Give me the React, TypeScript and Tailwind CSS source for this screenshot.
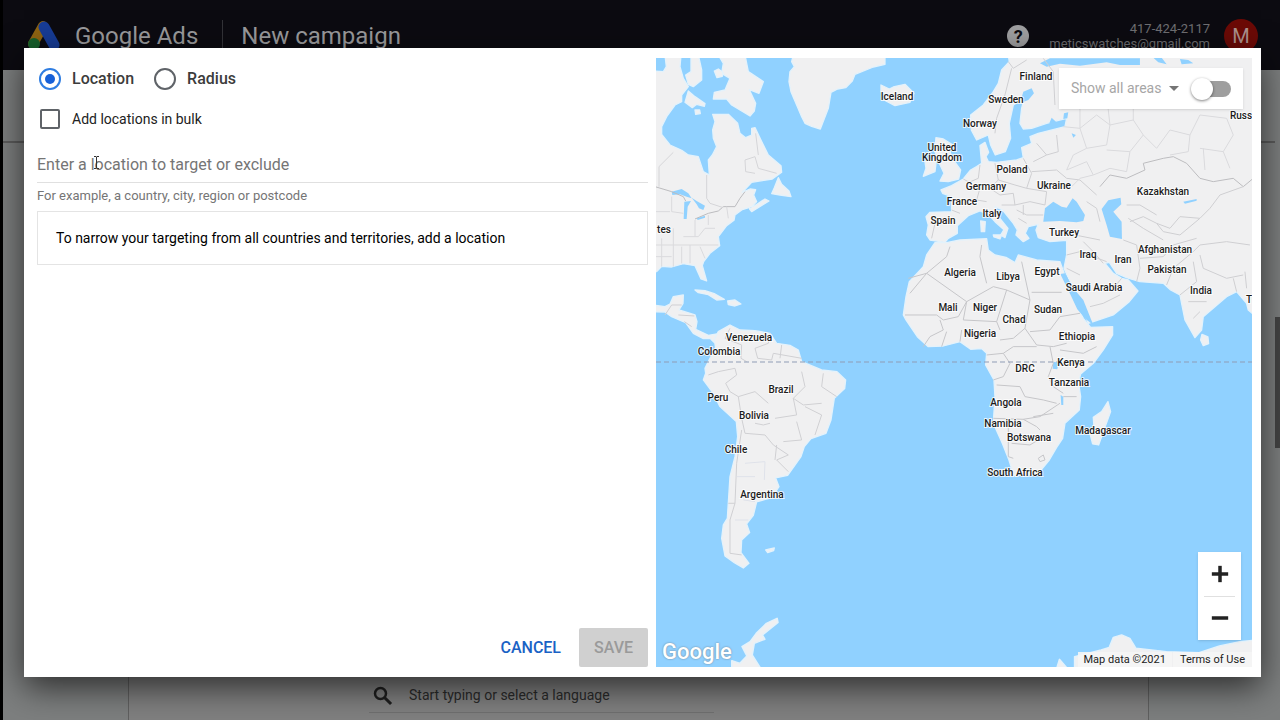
import { useState } from "react";
import { Minus, Plus } from "lucide-react";

// Country labels, x and y are the centre of the text on the map
const labels = [
  { name: "Iceland", x: 241, y: 38 },
  { name: "Finland", x: 380, y: 18 },
  { name: "Sweden", x: 350, y: 41 },
  { name: "Norway", x: 324, y: 65 },
  { name: "United", x: 286, y: 89 },
  { name: "Kingdom", x: 286, y: 99 },
  { name: "Poland", x: 356, y: 111 },
  { name: "Germany", x: 330, y: 128 },
  { name: "Ukraine", x: 398, y: 127 },
  { name: "France", x: 306, y: 143 },
  { name: "Italy", x: 336, y: 155 },
  { name: "Spain", x: 287, y: 162 },
  { name: "Turkey", x: 408, y: 174 },
  { name: "Kazakhstan", x: 507, y: 133 },
  { name: "Russ", x: 585, y: 57 },
  { name: "Afghanistan", x: 509, y: 191 },
  { name: "Pakistan", x: 511, y: 211 },
  { name: "Iraq", x: 432, y: 196 },
  { name: "Iran", x: 467, y: 201 },
  { name: "India", x: 545, y: 232 },
  { name: "T", x: 593, y: 241 },
  { name: "Saudi Arabia", x: 438, y: 229 },
  { name: "Algeria", x: 304, y: 214 },
  { name: "Libya", x: 352, y: 218 },
  { name: "Egypt", x: 391, y: 213 },
  { name: "Mali", x: 292, y: 249 },
  { name: "Niger", x: 329, y: 249 },
  { name: "Chad", x: 358, y: 261 },
  { name: "Sudan", x: 392, y: 251 },
  { name: "Nigeria", x: 324, y: 275 },
  { name: "Ethiopia", x: 421, y: 278 },
  { name: "Kenya", x: 415, y: 304 },
  { name: "DRC", x: 369, y: 310 },
  { name: "Tanzania", x: 413, y: 324 },
  { name: "Angola", x: 350, y: 344 },
  { name: "Namibia", x: 347, y: 365 },
  { name: "Botswana", x: 373, y: 379 },
  { name: "Madagascar", x: 447, y: 372 },
  { name: "South Africa", x: 359, y: 414 },
  { name: "Venezuela", x: 93, y: 279 },
  { name: "Colombia", x: 63, y: 293 },
  { name: "Brazil", x: 125, y: 331 },
  { name: "Peru", x: 62, y: 339 },
  { name: "Bolivia", x: 98, y: 357 },
  { name: "Chile", x: 80, y: 391 },
  { name: "Argentina", x: 106, y: 436 },
  { name: "tes", x: 8, y: 171 },
];

const WorldMap = () => (
  <svg
    viewBox="0 0 596 609"
    preserveAspectRatio="xMidYMid slice"
    className="block h-full w-full bg-[#90d1ff]"
    role="img"
    aria-label="World map"
  >
    <g transform="scale(0.3333)" fill="#f0f0f1" stroke="#e4f2fb" strokeWidth="4" strokeLinejoin="round">
      {/* North America */}
      <g transform="translate(-3 -9)">
        <path d="M-10 48L25 50L34 35L30 0H78L75 35L85 70L100 95L80 120V140L60 150L35 185L20 215V238L45 270L80 286L100 300L130 305L145 350L163 360L160 315L172 300L185 275L175 250L173 225L180 200L173 178L220 178L248 205L255 235L272 248L290 240V220L300 218L320 260L340 300L378 332L380 352L352 372L290 382L262 412L285 402L302 404L296 420L305 440L284 462L290 470L342 438L330 432L300 452L260 465L240 480L237 496L215 512L190 545L194 572L165 595L146 620L142 632L155 678L138 672L120 632L85 626L50 636L20 634L5 650H-10Z" />
        <path d="M190 0H270L280 50L325 80L312 115L283 104L302 145L298 168L285 183L230 150L215 132L175 132L178 112L210 105L225 70L200 55L205 25Z" />
        <path d="M108 0H130L140 45V75L115 95L100 88L92 60L108 50Z" />
        <path d="M100 108L120 125L150 146L148 154L125 148L112 158L90 142Z" />
        <path d="M178 48L190 42L204 52L202 64L186 68Z" />
        <path d="M120 165L134 165L136 176L122 178Z" />
        <path d="M370 368L380 388L402 408L408 425L375 420L350 416L358 398Z" />
        <path d="M415 0H690V28L655 36L600 58L592 78L572 98L548 102L528 112L520 160L496 222L470 214L450 205L440 185L425 150L408 110L402 80L405 50L418 35L410 20Z" />
        <g fill="#90d1ff" stroke="none">
          <path d="M0 15L12 18L22 38L10 46L0 40Z" />
          <path d="M50 410L80 402L100 415L110 430L95 425L75 418L52 420Z" />
          <path d="M88 440L108 438L98 455L95 492L86 492Z" />
          <path d="M110 428L125 438L150 452L145 465L132 460L125 448Z" />
          <path d="M125 490L150 482L150 488L128 495Z" />
          <path d="M58 160L66 163L62 168Z" />
        </g>
        <g fill="none" stroke="#bcbcbf" strokeWidth="3">
          <path d="M0 395L50 410L85 425L92 438M120 492L160 475L190 468L205 455L240 455L255 430L270 410" />
          <path d="M12 395V335L55 292M155 360V430L165 445L205 458M270 315L300 305L310 340L365 355M270 315L272 350L300 355M302 235L310 300" stroke="#d5d5d8" />
          <path d="M0 570H190M20 550V635M55 520V635M80 575V625M105 570V625M120 495V545M0 605H50M85 545L130 545L150 520L180 520M50 425V470L85 475M135 575L150 610M215 455L220 490M0 470L45 470M160 480V510" stroke="#dadadd" />
        </g>
      </g>

      {/* Central and South America */}
      <g transform="translate(-3 696)">
        <path d="M-10 45L30 50L45 42L55 20L85 15L84 40L72 60L120 75L126 95L122 118L160 136L186 132L192 148L178 158L165 145L145 146L115 130L92 98L50 80L30 66L-10 65Z" />
        <path d="M120 0L150 2L180 12L208 28L185 30L160 14L130 8Z" />
        <path d="M218 33L240 30L258 42L240 48L220 44Z" />
        <path d="M178 148L190 125L225 105L255 120L300 122L345 130L365 160L405 166L430 180L440 215L500 240L546 245L572 270L569 296L538 325L528 390L513 430L468 446L448 470L438 500L398 556L362 564L372 590L350 623L305 636L295 676L275 702L284 728L260 750L258 788L282 820L265 834L238 818L210 798L200 745L205 705L217 685L225 560L240 500L248 440L244 395L195 350L175 310L145 270L152 250L150 235L165 205L182 175Z" />
        <path d="M332 780L358 774L356 782L338 788Z" />
        <g fill="none" stroke="#d0d0d3" strokeWidth="3">
          <path d="M225 115L210 145L260 165L258 205L275 215M345 130L340 160L300 175L308 205L350 210L355 190L440 205M380 165L375 205M160 255L190 245L240 235L245 255L212 280L225 305L250 320L300 305L340 340M250 320L260 385L270 430L330 435L355 465L400 495L365 510L400 545M440 245L450 290L415 325L425 375L360 385M450 350L500 375L480 435M505 250L500 290L545 320M415 325L445 345L500 340M425 395L440 450L385 455M365 465L360 510M260 420L245 520L240 640L225 690L225 790L260 795M220 640L240 640M345 400L325 405L300 400M30 75L50 45L80 45M70 75L118 78M88 95L110 110" />
          <path d="M270 520L330 515L328 570M245 560L300 560M265 630L300 635M240 690L280 690" stroke="#dfe2ea" />
        </g>
      </g>

      {/* Europe and Asia */}
      <g transform="translate(672 -9)">
        <path d="M385 0L388 20L365 45L355 85L340 110L310 150L272 180L274 225L290 255L325 240L332 270L346 300L376 290L392 250L388 205L400 150L432 132L425 160L420 205L430 222L455 220L500 205L560 190L555 215L475 235L450 245L455 265L425 278L430 308L410 315L350 322L325 320L318 305L326 292L315 262L300 272L305 325L290 335L272 345L250 372L215 392L183 405L188 415L214 425L215 470L150 472L138 485L145 510L140 540L150 555L195 562L205 550L232 535L232 512L265 482L300 468L325 478L345 500L372 524L362 540L375 548L384 520L350 478L345 455L368 465L400 505L412 525L408 540L430 560L447 550L436 535L445 515L475 508L468 525L475 548L510 560L560 556L560 600L552 640L590 722L625 805L700 780L748 740L774 708L745 675L725 670L700 655L675 625L688 622L710 655L740 668L780 680L850 685L872 705L900 720L905 745L915 795L945 848L965 825L970 785L1005 755L1040 725L1070 710L1100 745L1105 765L1135 790V0Z" />
        <path d="M3 90L28 102L40 96L75 88L102 115L90 142L45 152L12 135L18 118L3 110Z" />
        <path d="M168 248L190 252L222 272L210 290L218 312L242 345L236 372L205 380L180 378L192 355L178 325L165 290Z" />
        <path d="M135 320L160 312L168 325L165 350L130 364L138 340Z" />
        <path d="M302 498L316 500L314 530L304 530ZM340 540L365 540L360 552L342 546Z" />
        <path d="M966 838L984 846L986 866L970 872L962 855Z" />
        <g fill="#90d1ff" stroke="none">
          <path d="M430 110L455 100L462 115L445 135L420 145Z" />
          <path d="M495 460L520 440L545 455L560 458L578 430L590 440L615 480L610 498L590 502L540 498L490 500Z" />
          <path d="M665 462L685 436L722 428L724 448L700 470L725 500L726 552L690 545L680 510Z" />
          <path d="M480 25L510 10H780V30H720L680 22L600 32L540 26L500 35Z" />
          <path d="M820 8H845L860 28L835 22ZM900 12L925 15L940 25L905 28Z" />
          <path d="M515 188L528 200L522 215L508 205ZM552 175L565 172L562 190L550 192ZM575 235L588 240L580 248Z" />
          <path d="M910 440L950 432V437L915 446Z" />
        </g>
        <g fill="none" stroke="#cfcfd2" strokeWidth="3">
          <path d="M385 20L400 40L440 15M395 40L375 120L350 190L345 235M490 10L520 50L525 150M300 330L295 370L260 385M250 372L300 400L290 435L320 440M345 325L355 375L405 390L440 400L455 355L430 310M355 375L330 400L360 420L400 415L405 450L365 450M440 400L500 410L495 450L450 440L405 450M455 350L530 345L560 370L600 375L650 420M470 265L500 300L460 320M530 240L535 290L500 300M150 505L165 505L155 550M410 465L440 480L490 480M415 490L440 505M215 465L240 475M430 450L430 480" />
          <path d="M550 215L600 220L620 280L580 300L560 345M620 280L680 270L690 210L650 180L600 220M690 210L760 195L790 240L750 290L680 285M790 240L830 280L870 225L930 240L925 290L870 300M930 240L960 180L1040 190L1060 240L1030 290L960 280M750 290L740 350L690 340L640 360L620 320M560 345L620 320M1030 290L1050 340M600 120V220M680 120L690 210M760 120L760 195M970 280L975 345M570 400L600 370L640 360" stroke="#dadadd" />
          <path d="M660 395L690 360L740 370L795 345L790 325L850 310L880 305L920 325L960 370L1000 380L1060 370L1090 395L1120 370" stroke="#bdbdc0" />
          <path d="M1090 395L1020 420L990 460L960 490L900 485L870 520L830 505L790 485L750 500M830 505L850 530L900 540L960 490M740 450L780 450L830 480M745 490L790 520L850 555M620 440L650 460L660 500M610 560L640 590L670 625M730 555L770 570L780 640L770 680M780 610L850 605L880 570L950 550M860 690L880 640L940 590L960 570L1040 560L1110 570M960 600L970 640L1040 670L1090 660M940 620L950 680L900 720M1060 670L1070 710M560 600L600 590L680 620M560 640L600 660M630 755L670 745L720 720M700 700L725 670M925 740L980 740M940 790L960 770M1095 650L1100 700M585 540L660 555" />
        </g>
      </g>

      {/* Africa */}
      <g transform="translate(672 516)">
        <path d="M165 38L200 38L240 30L320 26L325 60L345 75L378 82L405 98L415 75L470 90L540 95L552 128L575 190L595 235L610 265L632 292L698 290L698 315L670 360L640 400L602 432L596 460L602 500L598 540L555 580L548 625L530 652L508 690L475 730L402 738L387 690L367 640L340 580L345 500L342 450L317 405L320 370L305 356L272 358L240 335L190 348L145 350L112 320L78 270L70 255L78 200L88 155L130 110L140 75Z" />
        <path d="M684 515L692 545L672 600L656 645L638 642L630 610L642 590L640 562L665 545Z" />
        <path d="M541 132L555 130L580 175L610 210L640 285L618 268L592 238L572 195Z" fill="#90d1ff" stroke="none" />
        <path d="M520 395L536 398L532 418L518 416ZM542 495L550 500L550 525L544 525Z" fill="#90d1ff" stroke="none" />
        <g fill="none" stroke="#c6c6c9" strokeWidth="3">
          <path d="M140 130L260 215L340 170L380 180L450 210M140 130L90 190M85 145L140 130L200 80L210 50M305 45L300 80L320 160M425 95L450 210M455 187H545M75 255H170L190 270L235 260L260 215M260 215L250 270L350 275L360 300M350 275L380 180M130 350L150 320L190 300L180 270M185 350L200 305M240 335L245 300M360 330L400 325L435 295L450 210M435 295L470 345L520 350L560 340M450 305L510 300L540 260L600 250M540 360L610 370L650 350M320 375L370 370L400 350L470 350M370 370L390 400L370 440L340 450M350 465L420 470L435 500L490 510L530 520M510 350L520 400L505 440L520 470L550 490M550 500L590 500M340 565L430 568L480 560L540 520M430 568L470 590L480 600M460 560L520 550M385 590L385 680L400 685M395 640L450 645L500 615M475 685L490 675L495 690L480 695Z" />
        </g>
      </g>

      {/* Antarctica */}
      <g transform="translate(-48 1446) scale(1.2245 1)">
        <path d="M336 235L338 248L300 285L306 298L280 310L275 345L298 390H225V362L245 370L262 348L250 320L270 305L285 280L310 250Z" />
        <path d="M1020 390L1028 358L1050 390ZM1065 350L1130 330L1150 322L1160 292L1180 285L1200 295L1215 325L1290 335L1370 338L1420 318L1470 305L1510 300V390H1065Z" />
      </g>
    </g>

    {/* Equator */}
    <path d="M0 304H596" stroke="#8f9cb5" strokeWidth="1" strokeDasharray="5 3" />

    <g
      fill="#1c1c1c"
      stroke="#ffffff"
      strokeOpacity="0.8"
      strokeWidth="2"
      paintOrder="stroke"
      textAnchor="middle"
      className="text-[10px] font-medium"
    >
      {labels.map((label) => (
        <text key={label.name} x={label.x} y={label.y} dominantBaseline="central">
          {label.name}
        </text>
      ))}
    </g>
  </svg>
);

const MapPanel = () => {
  const [showAreas, setShowAreas] = useState(false);

  return (
    <div className="relative min-h-[609px] overflow-hidden">
      <div className="absolute inset-0">
        <WorldMap />
      </div>

      {/* Area filter */}
      <div className="absolute top-[10px] right-[9px] flex h-[41px] items-center bg-white px-3 shadow">
        <select
          aria-label="Areas"
          className="w-[106px] appearance-none bg-transparent text-[14px] text-[#a6a6a6] outline-none"
        >
          <option>Show all areas</option>
        </select>
        <svg viewBox="0 0 10 5" className="pointer-events-none -ml-2 h-[5px] w-[10px]" fill="#757575">
          <path d="M0 0H10L5 5Z" />
        </svg>
        <label className="relative ml-3 flex h-6 w-10 cursor-pointer items-center">
          <input
            type="checkbox"
            className="peer sr-only"
            aria-label="Show areas on map"
            checked={showAreas}
            onChange={() => setShowAreas(!showAreas)}
          />
          <span className="ml-1 h-4 w-9 rounded-full bg-[#9e9e9e] peer-checked:bg-[#8ab4f8]"></span>
          <span className="absolute left-0 h-[22px] w-[22px] rounded-full bg-white shadow-[0_1px_3px_rgba(0,0,0,0.5)] peer-checked:left-5"></span>
        </label>
      </div>

      {/* Zoom controls */}
      <div className="absolute right-[11px] bottom-[27px] flex h-[88px] w-[43px] flex-col items-center bg-white shadow">
        <button aria-label="Zoom in" className="flex w-full flex-1 items-center justify-center">
          <Plus size={28} strokeWidth={3} strokeLinecap="butt" color="#222" />
        </button>
        <span className="h-px w-[31px] bg-[#e0e0e0]"></span>
        <button aria-label="Zoom out" className="flex w-full flex-1 items-center justify-center">
          <Minus size={28} strokeWidth={3} strokeLinecap="butt" color="#222" />
        </button>
      </div>

      {/* Attribution */}
      <span className="absolute bottom-0 left-[6px] text-[22px] leading-[30px] font-medium text-white [text-shadow:0_0_2px_#6b7d8c]">
        Google
      </span>
      <div className="absolute right-0 bottom-0 flex h-[15px] text-[11px] leading-[15px] text-[#222]">
        <span className="bg-[#f5f5f5]/90 px-[6px]">Map data ©2021</span>
        <a href="#terms" className="ml-px bg-[#f5f5f5]/90 px-[7px]">
          Terms of Use
        </a>
      </div>
    </div>
  );
};

const LocationForm = () => {
  const [mode, setMode] = useState("location");

  const modes = [
    { name: "Location", id: "location" },
    { name: "Radius", id: "radius" },
  ];

  return (
    <form className="flex flex-col pt-[9px]" onSubmit={(e) => e.preventDefault()}>
      <div className="flex gap-5 pl-[2px]">
        {modes.map((item) => (
          <label key={item.id} className="flex h-6 items-center gap-[11px] text-[16px] font-medium text-[#3c3c3c]">
            <input
              type="radio"
              name="mode"
              checked={mode === item.id}
              onChange={() => setMode(item.id)}
              className="h-[22px] w-[22px] appearance-none rounded-full border-2 border-[#5f6368] bg-clip-content p-1 checked:border-[#2f7de1] checked:bg-[#1660d8]"
            />
            {item.name}
          </label>
        ))}
      </div>

      <label className="mt-4 flex h-6 items-center gap-3 pl-[3px] text-[14px] text-[#222]">
        <input type="checkbox" className="h-5 w-5 appearance-none rounded-[2px] border-2 border-[#5f6368] checked:bg-[#1660d8]" />
        Add locations in bulk
      </label>

      <div className="relative mt-4 border-b border-[#e0e0e0]">
        <input
          type="text"
          aria-label="Enter a location to target or exclude"
          placeholder="Enter a location to target or exclude"
          className="block h-[35px] w-full bg-transparent text-[16px] text-[#333] outline-none placeholder:text-[#757575]"
        />
        {/* Text cursor */}
        <svg viewBox="0 0 7 15" className="absolute top-2 left-[56px] h-[15px] w-[7px]" fill="none" stroke="#333">
          <path d="M1 1.5H3L3.5 2L4 1.5H6M3.5 2V13M1 13.5H3L3.5 13L4 13.5H6" />
        </svg>
      </div>
      <p className="mt-1 text-[13px] leading-[18px] text-[#757575]">
        For example, a country, city, region or postcode
      </p>
      <div className="mt-[6px] border border-[#e4e4e4] px-[18px] py-4 text-[14px] leading-5 text-black">
        To narrow your targeting from all countries and territories, add a location
      </div>

      <div className="mt-auto flex justify-end gap-2 text-[16px] font-medium">
        <button type="button" className="h-[39px] px-[10px] text-[#1a62c5]">
          CANCEL
        </button>
        <button type="submit" disabled className="h-[39px] w-[69px] rounded-[2px] bg-[#d0d0d0] text-[#9a9a9a]">
          SAVE
        </button>
      </div>
    </form>
  );
};

const Header = () => (
  <header className="flex h-[70px] items-center bg-[#0c0b11] pt-[2px] pr-[22px] pl-[24px] text-[#9b9b9d]">
    {/* Logo */}
    <svg viewBox="0 0 36 32" className="h-8 w-9" strokeLinecap="round">
      <path d="M16 6L6 24" stroke="#8f6412" strokeWidth="10" />
      <circle cx="7" cy="24" r="6" fill="#17602c" />
      <path d="M17 7L27 25" stroke="#173c96" strokeWidth="11" />
    </svg>
    <span className="ml-3 text-[24px] leading-8">Google Ads</span>
    <span className="mr-[18px] ml-6 h-8 w-px bg-[#333338]"></span>
    <h1 className="text-[24px] leading-8">New campaign</h1>

    <button
      aria-label="Help"
      className="ml-auto flex h-[22px] w-[22px] items-center justify-center rounded-full bg-[#a0a0a2] text-[18px] font-bold text-[#0c0b11]"
    >
      ?
    </button>
    <div className="ml-5 text-right text-[13px] leading-[15px] text-[#6f6f72]">
      <p>417-424-2117</p>
      <p>meticswatches@gmail.com</p>
    </div>
    <button className="ml-[14px] h-[34px] w-[34px] rounded-full bg-[#6c0a06] text-[20px] text-[#ac918d]">M</button>
  </header>
);

export default function App() {
  return (
    <div className="relative flex min-h-screen flex-col border-l-[3px] border-black bg-[#7d7f7f] font-[Roboto,sans-serif]">
      <Header />

      <div className="flex flex-1">
        <div className="flex flex-1 flex-col">
          <div className="h-[73px] border-b-2 border-[#5c5c5c]"></div>
          <main className="mr-[126px] ml-[125px] flex flex-1 flex-col justify-end border-x border-[#606060] bg-[#808080] pb-[7px]">
            <label className="ml-[240px] flex h-[34px] w-[345px] items-center border-b border-[#707070] pl-1">
              <svg viewBox="0 0 20 20" className="h-5 w-5 shrink-0" fill="none" stroke="#1f1f1f" strokeLinecap="square">
                <circle cx="7.5" cy="7.5" r="5.5" strokeWidth="2.5" />
                <path d="M12.5 12.5L17 17" strokeWidth="3" />
              </svg>
              <input
                type="text"
                aria-label="Language"
                placeholder="Start typing or select a language"
                className="ml-4 w-full bg-transparent text-[14px] text-[#222] outline-none placeholder:text-[#2a2a2a]"
              />
            </label>
          </main>
        </div>
        {/* Scroll thumb */}
        <div className="w-[5px] pt-[247px]">
          <div className="h-[131px] bg-[#444]"></div>
        </div>
      </div>

      {/* Location dialog */}
      <div className="absolute inset-0 flex pt-[48px] pr-[19px] pb-[43px] pl-[21px]">
        <div
          role="dialog"
          aria-label="Choose locations"
          className="grid flex-1 grid-cols-[611fr_596fr] gap-2 bg-white pt-[10px] pr-[9px] pb-[10px] pl-[13px] shadow-[0_10px_32px_rgba(0,0,0,0.65)]"
        >
          <LocationForm />
          <MapPanel />
        </div>
      </div>
    </div>
  );
}
